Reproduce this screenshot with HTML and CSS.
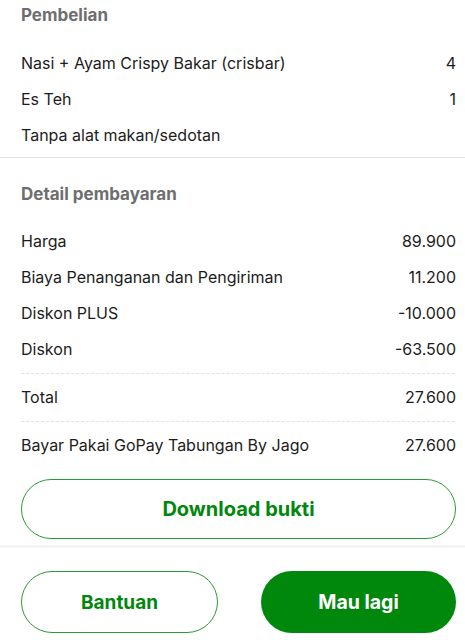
FILE: index.html
```html
<!DOCTYPE html>
<html>
<head>
<meta charset="utf-8">
<link rel="stylesheet" href="styles.css">
</head>
<body>
<div class="page">
  <section class="section purchase">
    <h2 class="title">Pembelian</h2>
    <div class="rows">
      <div class="row"><span>Nasi + Ayam Crispy Bakar (crisbar)</span><span>4</span></div>
      <div class="row"><span>Es Teh</span><span>1</span></div>
      <div class="row"><span>Tanpa alat makan/sedotan</span></div>
    </div>
  </section>
  <div class="divider"></div>
  <section class="section payment">
    <h2 class="title">Detail pembayaran</h2>
    <div class="rows">
      <div class="row"><span>Harga</span><span>89.900</span></div>
      <div class="row"><span>Biaya Penanganan dan Pengiriman</span><span>11.200</span></div>
      <div class="row"><span>Diskon PLUS</span><span>-10.000</span></div>
      <div class="row"><span>Diskon</span><span>-63.500</span></div>
      <div class="dash"></div>
      <div class="row"><span>Total</span><span>27.600</span></div>
      <div class="dash"></div>
      <div class="row"><span>Bayar Pakai GoPay Tabungan By Jago</span><span>27.600</span></div>
    </div>
    <button class="btn btn-outline btn-wide">Download bukti</button>
  </section>
  <footer class="bottom-bar">
    <button class="btn btn-outline">Bantuan</button>
    <button class="btn btn-fill">Mau lagi</button>
  </footer>
</div>
</body>
</html>
```

FILE: styles.css
```css
* { box-sizing: border-box; }
html, body { margin: 0; padding: 0; background: #fff; }
body {
  font-family: Inter, "Noto Sans", sans-serif;
  color: #1c1c1c;
  width: 465px;
  height: 640px;
  overflow: hidden;
}
.page { display: flex; flex-direction: column; }
.section { padding: 0 9px 0 21px; }
.title {
  margin: 0;
  font-size: 17px;
  line-height: 24px;
  font-weight: 700;
  color: #6e6e6e;
}
.purchase .title { padding-top: 3px; }
.purchase .rows { padding-top: 18px; }
.payment .title { padding-top: 24px; }
.payment .rows { padding-top: 17px; }
.row {
  display: flex;
  justify-content: space-between;
  align-items: center;
  height: 36px;
  font-size: 16px;
}
.divider {
  height: 1px;
  background: #e6e6e6;
  margin-top: 4px;
}
.dash {
  height: 0;
  border-top: 1px dashed #e2e2e2;
  margin: 6px 1px 5px 0;
}
.btn {
  font-family: Inter, "Noto Sans", sans-serif;
  font-weight: 700;
  font-size: 18px;
  border-radius: 999px;
  height: 60px;
  cursor: pointer;
}
.btn-outline {
  background: #fff;
  color: #00880d;
  border: 1.5px solid #2b9a36;
}
.btn-fill {
  background: #00880d;
  color: #fff;
  border: none;
}
.btn-wide {
  display: block;
  width: 100%;
  margin-top: 16px;
  font-size: 20px;
}
.bottom-bar {
  margin-top: 6px;
  border-top: 3px solid #f4f4f4;
  padding: 23px 9px 0 21px;
  display: flex;
  gap: 43px;
}
.bottom-bar .btn {
  flex: 1;
  height: 62px;
  font-size: 19px;
}
.bottom-bar .btn-fill { font-size: 19.5px; }
```
